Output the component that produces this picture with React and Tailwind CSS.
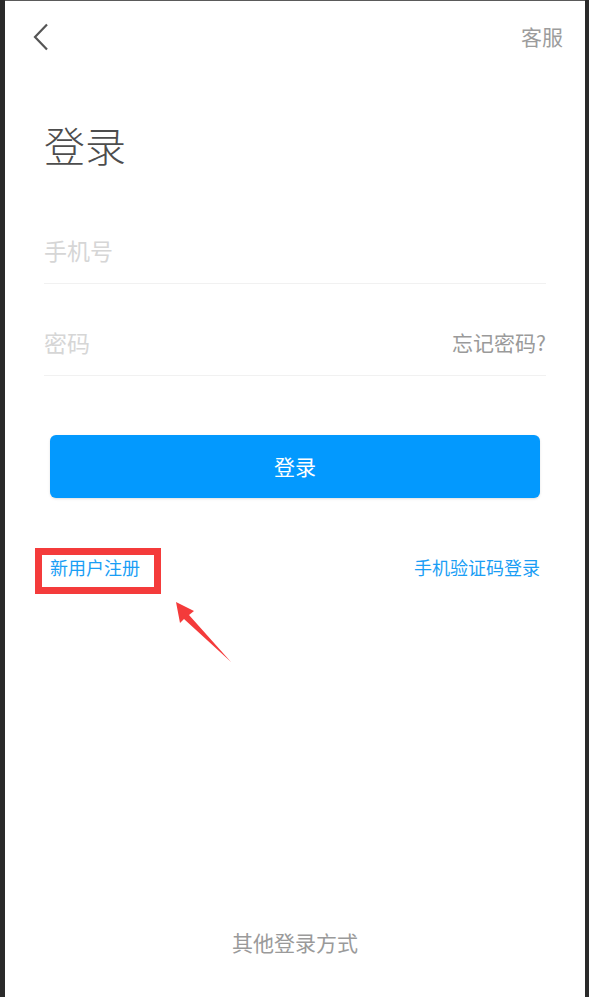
import React from 'react';

const font = { fontFamily: '"Noto Sans CJK SC", "Noto Sans", sans-serif' };

const Field = ({ placeholder, right }) => (
  <div className="h-[92px] flex items-end justify-between pb-[21px] border-b border-[#f1f1f1]">
    <span className="text-[23px] leading-[24px] text-[#d6d6d6]">{placeholder}</span>
    {right && <span className="text-[21px] leading-[24px] text-[#9a9a9a]">{right}</span>}
  </div>
);

const Arrow = () => (
  <svg className="absolute left-[126px] top-[47px]" width="60" height="66" viewBox="0 0 60 66">
    <polygon points="0,0 18,9 13,13 55,60 8,17 4,21" fill="#f43b3b" />
  </svg>
);

export default function App() {
  return (
    <div className="w-[589px] h-[997px] flex bg-[#2a2a2a]" style={font}>
      <div className="w-[5px] shrink-0" />
      <div className="w-[580px] shrink-0 bg-white border-t border-[#5a5a5a] flex flex-col">
        <div className="h-[71px] flex items-center justify-between pl-[28px] pr-[22px]">
          <svg width="16" height="28" viewBox="0 0 16 28" fill="none">
            <path d="M14 1.5 L2 14 L14 26.5" stroke="#555" strokeWidth="2.2" strokeLinejoin="miter" />
          </svg>
          <span className="text-[21px] leading-none text-[#9c9c9c]">客服</span>
        </div>

        <div className="px-[39px]">
          <h1 className="mt-[51px] text-[41px] leading-[42px] text-[#4d4d4d] font-light">登录</h1>

          <div className="mt-[27px]">
            <Field placeholder="手机号" />
            <Field placeholder="密码" right="忘记密码?" />
          </div>

          <div className="px-[6px]">
            <button className="mt-[59px] w-full h-[63px] rounded-[6px] bg-[#0399fe] text-white text-[21px] shadow-sm">
              登录
            </button>

            <div className="relative mt-[57px] flex justify-between items-center h-[24px] text-[18px] text-[#1a9ef5]">
              <span>新用户注册</span>
              <span>手机验证码登录</span>
              <div className="absolute left-[-15px] top-[-7px] w-[126px] h-[46px] border-[7px] border-[#f43b3b]" />
              <Arrow />
            </div>
          </div>
        </div>

        <div className="flex-1" />
        <div className="pb-[43px] text-center text-[21px] leading-[24px] text-[#9a9a9a]">其他登录方式</div>
      </div>
      <div className="w-[4px] shrink-0" />
    </div>
  );
}
